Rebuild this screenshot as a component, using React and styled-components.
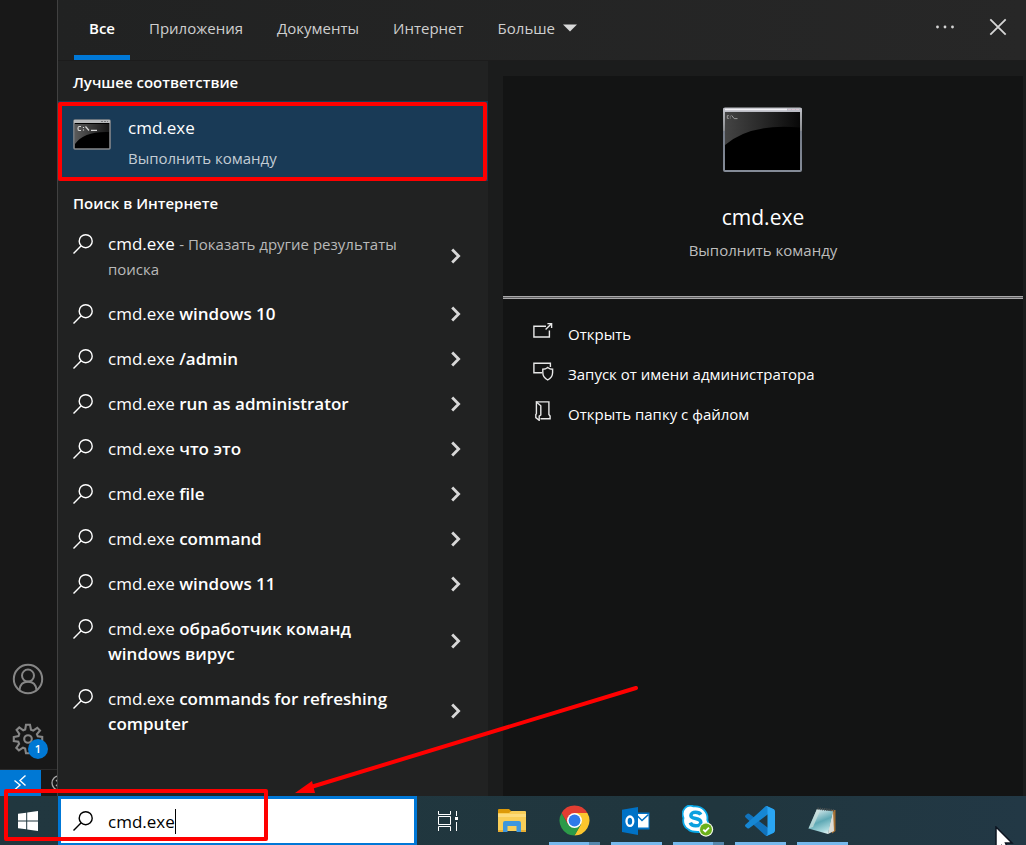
import React, { useState } from "react";
import styled, { createGlobalStyle } from "styled-components";

const GlobalStyle = createGlobalStyle`
  * {
    box-sizing: border-box;
  }

  body {
    margin: 0;
    background-color: #181818;
    color: #ffffff;
    font-family: "Open Sans", "Noto Sans", sans-serif;
    font-size: 15px;
  }

  button {
    padding: 0;
    border: none;
    background: none;
    color: inherit;
    font: inherit;
    text-align: left;
    cursor: pointer;
  }

  svg {
    display: block;
    flex-shrink: 0;
  }
`;

const Desktop = styled.div`
  display: flex;
  flex-direction: column;
  min-height: 100vh;
  overflow: hidden;
`;

const Workspace = styled.div`
  display: flex;
  flex: 1;
`;

/* editor window behind the start menu */

const ActivityBar = styled.aside`
  display: flex;
  flex-direction: column;
  justify-content: flex-end;
  width: 57px;
  overflow: hidden;
`;

const ActivityButton = styled.button`
  position: relative;
  display: flex;
  align-items: center;
  justify-content: center;
  width: 56px;
  height: 60px;
  color: #868686;
`;

const Badge = styled.span`
  position: absolute;
  top: 30px;
  left: 28px;
  width: 20px;
  height: 20px;
  border-radius: 50%;
  background-color: #0078d4;
  color: white;
  font-size: 11px;
  font-weight: 600;
  line-height: 20px;
  text-align: center;
`;

const StatusBar = styled.div`
  display: flex;
  align-items: center;
  gap: 10px;
  width: 80px;
  height: 27px;
  border-top: 1px solid #2b2b2b;
`;

const RemoteButton = styled.button`
  display: flex;
  align-items: center;
  justify-content: center;
  width: 41px;
  height: 26px;
  padding-right: 2px;
  background-color: #0078d4;
`;

/* start menu */

const SearchPanel = styled.main`
  display: flex;
  flex: 1;
  flex-direction: column;
  border-left: 1px solid #414141;
  background-color: #212222;
`;

const PanelHeader = styled.header`
  display: flex;
  justify-content: space-between;
  height: 61px;
  padding: 0 19px 0 16px;
  border-bottom: 1px solid #1c1c1c;
  background: linear-gradient(90deg, #212222, #272727);
`;

const Tabs = styled.nav`
  display: flex;
  gap: 4px;
`;

const Tab = styled.button`
  display: flex;
  align-items: center;
  gap: 8px;
  height: 60px;
  padding: 0 15px 4px;
  border-top: 5px solid transparent;
  border-bottom: 5px solid ${(props) => (props.$active ? "#0078d7" : "transparent")};
  color: ${(props) => (props.$active ? "#ffffff" : "#cfcfcf")};
  font-weight: ${(props) => (props.$active ? 600 : 400)};
  line-height: 20px;
`;

const WindowActions = styled.div`
  display: flex;
  align-items: center;
  gap: 34px;
  height: 54px;
  color: #d6d6d6;
`;

const PanelBody = styled.div`
  display: flex;
  flex: 1;
`;

const Results = styled.section`
  width: 430px;
`;

const GroupTitle = styled.h2`
  margin: 0;
  padding: 3px 15px 0;
  font-size: 15px;
  font-weight: 600;
  line-height: ${(props) => (props.$tall ? "38px" : "37px")};
`;

const BestMatch = styled.button`
  position: relative;
  display: flex;
  gap: 17px;
  width: 100%;
  height: 80px;
  padding: 14px 15px;
  background-color: #193a56;
`;

const BestIcon = styled.span`
  padding-top: 4px;
`;

const BestName = styled.span`
  display: block;
  font-size: 17px;
  line-height: 25px;
`;

const BestHint = styled.span`
  display: block;
  margin-top: 6px;
  color: #c3ccd4;
  line-height: 24px;
`;

const ResultList = styled.ul`
  margin: 0;
  padding: 0;
  list-style: none;
`;

const ResultItem = styled.li`
  display: flex;
  align-items: center;
  justify-content: space-between;
  padding: 9px 27px 11px 15px;
`;

const ResultButton = styled.button`
  display: flex;
  gap: 15px;
  width: 350px;
  font-size: 17px;
  line-height: 25px;

  svg {
    margin-top: 3px;
  }

  strong {
    font-weight: 600;
  }
`;

const Note = styled.span`
  color: #b9b9b9;
  font-size: 15px;
  line-height: 20px;
`;

const DetailPane = styled.section`
  display: flex;
  flex: 1;
  padding: 15px 3px 0 15px;
  background-color: #1b1c1c;
`;

const DetailCard = styled.article`
  flex: 1;
  background-color: #131414;
`;

const DetailHead = styled.div`
  display: flex;
  flex-direction: column;
  align-items: center;
  height: 220px;
  padding-top: 31px;
`;

const DetailTitle = styled.h1`
  margin: 27px 0 0;
  font-size: 21px;
  font-weight: 400;
  line-height: 34px;
`;

const DetailHint = styled.p`
  margin: 4px 0 0;
  color: #bdbdbd;
  line-height: 24px;
`;

const Divider = styled.hr`
  height: 3px;
  margin: 0;
  border: solid #a9a8aa;
  border-width: 1px 0;
  background-color: #5f5f61;
`;

const ActionList = styled.div`
  display: flex;
  flex-direction: column;
  padding: 15px 30px;
`;

const Action = styled.button`
  display: flex;
  align-items: center;
  gap: 14px;
  height: 40px;

  svg {
    margin-bottom: 6px;
  }
`;

/* taskbar */

const Taskbar = styled.footer`
  position: relative;
  display: flex;
  height: 49px;
  background: linear-gradient(90deg, #21373f, #20363e 70%, #223845 100%);
`;

const StartButton = styled.button`
  display: flex;
  align-items: center;
  justify-content: center;
  width: 58px;
  padding-right: 2px;
`;

const SearchBox = styled.label`
  display: flex;
  align-items: center;
  width: 359px;
  padding-left: 12px;
  border: 3px solid #0078d7;
  border-bottom-width: 2px;
  background-color: white;
  color: black;
`;

const SearchInput = styled.input`
  field-sizing: content;
  margin-left: 15px;
  padding: 0;
  border: none;
  outline: none;
  background: none;
  color: black;
  caret-color: transparent;
  font: inherit;
  font-size: 17px;
`;

const Caret = styled.span`
  width: 1px;
  height: 25px;
  background-color: black;
`;

const TaskButton = styled.button`
  display: flex;
  flex-direction: column;
  align-items: center;
  justify-content: space-between;
  width: ${(props) => (props.$wide ? "64px" : "62px")};
`;

const TaskIcon = styled.span`
  display: flex;
  align-items: center;
  height: 46px;
  padding-top: 3px;
`;

const Underline = styled.span`
  width: 51px;
  height: 3px;
  background: ${(props) =>
    props.$stacked
      ? "linear-gradient(90deg, #76b9ed 40px, #5487ac 40px)"
      : "#76b9ed"};
`;

/* red marks */

const MatchFrame = styled.span`
  position: absolute;
  inset: 1px 1px 0 0;
  border: 4px solid #ff0000;
  border-radius: 2px;
`;

const SearchFrame = styled.span`
  position: absolute;
  top: -7px;
  left: 4px;
  width: 264px;
  height: 52px;
  border: 4px solid #ff0000;
  border-radius: 2px;
  pointer-events: none;
`;

const Arrow = styled.svg`
  position: absolute;
  bottom: 50px;
  left: 295px;
  pointer-events: none;
`;

const Pointer = styled.svg`
  position: absolute;
  top: 30px;
  right: 8px;
`;

const SearchIcon = () => (
  <svg width="20" height="20" viewBox="0 0 20 20" fill="none" stroke="currentColor" strokeWidth="1.4">
    <circle cx="12.7" cy="7.2" r="6.5" />
    <path d="M8.2 11.8 L0.5 19.5" />
  </svg>
);

const ChevronIcon = () => (
  <svg width="10" height="16" viewBox="0 0 10 16" fill="none" stroke="#d8d8d8" strokeWidth="2.8">
    <path d="M1.2 1.6 L7.6 8 L1.2 14.4" />
  </svg>
);

const ConsoleSmall = () => (
  <svg width="38" height="32" viewBox="0 0 38 32">
    <defs>
      <linearGradient id="glossSmall" x1="0" y1="0" x2="1" y2="0">
        <stop offset="0" stopColor="#5a5a5a" />
        <stop offset="1" stopColor="#161616" />
      </linearGradient>
    </defs>
    <rect x="1" y="1" width="36" height="29" rx="1" fill="#000" stroke="#85888b" strokeWidth="1.6" />
    <path d="M2 5 H36 V13 Q11 12 2 25 Z" fill="url(#glossSmall)" />
    <rect x="1" y="1" width="36" height="3" fill="#b6b8ba" />
    <path d="M28 2.5 H35" stroke="#77797b" strokeDasharray="2 1" />
    <path d="M8 7.5 H6 Q5 7.5 5 9.5 T6 11.5 H8 M10.5 8 V8.9 M10.5 10.5 V11.4 M12.5 7.5 L16 11.5 M18 11.4 H24" fill="none" stroke="#d7d7d7" strokeWidth="1.2" />
  </svg>
);

const ConsoleLarge = () => (
  <svg width="80" height="66" viewBox="0 0 80 66">
    <defs>
      <linearGradient id="glossLarge" x1="0" y1="0" x2="1" y2="0">
        <stop offset="0" stopColor="#444444" />
        <stop offset="0.5" stopColor="#282828" />
        <stop offset="1" stopColor="#080808" />
      </linearGradient>
      <linearGradient id="frameLarge" x1="0" y1="0" x2="0" y2="1">
        <stop offset="0" stopColor="#b9bbc0" />
        <stop offset="0.35" stopColor="#8c8e92" />
        <stop offset="0.36" stopColor="#747b88" />
        <stop offset="1" stopColor="#848b97" />
      </linearGradient>
    </defs>
    <rect x="1" y="1.5" width="77" height="62.5" rx="1" fill="#000" stroke="url(#frameLarge)" strokeWidth="2" />
    <path d="M2 5 H77 V20.5 Q27 16 2 38 Z" fill="url(#glossLarge)" />
    <rect x="0.5" y="1" width="78" height="4" fill="#bcbdc5" />
    <path d="M2 2.5 H64" stroke="#f1f1f5" strokeWidth="1.5" />
    <path d="M65 2.5 H77" stroke="#d8c5d2" strokeDasharray="3 1" />
    <path d="M5.8 8.6 H4.3 V11.4 H5.8 M7.3 8.8 V9.6 M7.3 10.6 V11.4 M8.6 8.4 L11.2 11.6 M11.2 11.6 H14.5" fill="none" stroke="#9b9b9b" />
  </svg>
);

const OpenIcon = () => (
  <svg width="21" height="20" viewBox="0 0 21 20" fill="none" stroke="#e8e8e8" strokeWidth="1.4">
    <path d="M13 5.2 H0.9 V16 H16.4 V9.5" />
    <path d="M12.6 8.5 L18.4 2.7 M14.4 2.6 H18.6 V6.9" />
  </svg>
);

const AdminIcon = () => (
  <svg width="21" height="20" viewBox="0 0 21 20" fill="none" stroke="#e8e8e8" strokeWidth="1.4">
    <path d="M17.4 6 V2.2 H0.9 V11.7 H9" />
    <path d="M14.7 6.5 Q12.5 8.2 9.8 8.2 V11.5 Q9.8 16.5 14.7 19 Q19.6 16.5 19.6 11.5 V8.2 Q16.9 8.2 14.7 6.5 Z" />
  </svg>
);

const FolderIcon = () => (
  <svg width="21" height="20" viewBox="0 0 21 20" fill="none" stroke="#e8e8e8" strokeWidth="1.4">
    <path d="M3.4 0.9 H15.9 V13.4 L17.1 15 V17.8 H7.5" />
    <path d="M3.4 0.9 L7.8 4.8 V14 L6.2 15.2 V19.3 L2.8 16.6 V13.6 L3.4 12.8 Z" />
  </svg>
);

const AccountIcon = () => (
  <svg width="32" height="32" viewBox="0 0 32 32" fill="none" stroke="currentColor" strokeWidth="2">
    <circle cx="16" cy="16" r="14.2" />
    <circle cx="16" cy="12.6" r="6" />
    <path d="M7.5 27 C8 21.5 11.5 18.8 16 18.8 S24 21.5 24.5 27" />
  </svg>
);

const GearIcon = () => (
  <svg width="32" height="32" viewBox="0 0 32 32" fill="none" stroke="currentColor" strokeWidth="2.1">
    <path d="M14 1.8 H18 L19 6.7 L21.2 7.6 L25.3 4.8 L28 7.5 L24.9 11.2 L25.8 13.4 L30.2 14 V18 L25.4 18.7 L24.5 21 L27.3 25 L24.6 27.7 L20.7 24.9 L18.8 25.8 L18 30.2 H14 L13.1 25.6 L11 24.7 L6.9 27.4 L4.3 24.8 L7.1 20.8 L6.3 18.8 L1.8 18 V14 L6.5 13.1 L7.3 11 L4.6 7 L7.3 4.4 L11.2 7.3 L13.2 6.5 Z" />
    <circle cx="16" cy="16" r="3.8" />
  </svg>
);

const RemoteIcon = () => (
  <svg width="14" height="18" viewBox="0 0 14 18" fill="none" stroke="#fff" strokeWidth="1.4">
    <path d="M1.5 6.5 L7 11 L1.5 16 M12.5 1.5 L7 6.5 L12.5 11.5" />
  </svg>
);

const ErrorIcon = () => (
  <svg width="16" height="16" viewBox="0 0 16 16" fill="none" stroke="#a9a9a9" strokeWidth="1.3">
    <circle cx="8" cy="8" r="7" />
    <path d="M5 5 L11 11 M11 5 L5 11" />
  </svg>
);

const WindowsIcon = () => (
  <svg width="20" height="20" viewBox="0 0 20 20" fill="#fff">
    <path d="M0 2.8 L8.2 1.7 V9.5 H0 Z M9.2 1.5 L20 0 V9.5 H9.2 Z M0 10.5 H8.2 V18.3 L0 17.2 Z M9.2 10.5 H20 V20 L9.2 18.5 Z" />
  </svg>
);

const TaskViewIcon = () => (
  <svg width="22" height="20" viewBox="0 0 22 20" fill="none" stroke="#fff" strokeWidth="1">
    <path d="M0.5 0 V3.5 H12.5 V0 M0.5 20 V15.5 H12.5 V20 M0.5 5.5 H12.5 V13.5 H0.5 Z M18.5 0 V5 M18.5 11 V20" />
    <rect x="17" y="6" width="3" height="3" fill="#fff" stroke="none" />
  </svg>
);

const ExplorerIcon = () => (
  <svg width="28" height="24" viewBox="0 0 28 24">
    <path d="M0 1 Q0 0 1 0 H11 L13.5 2.5 V7 H0 Z" fill="#dd9a09" />
    <path d="M0 4 H11 L13.5 2 H27 Q28 2 28 3 V22 H0 Z" fill="#f9ce58" />
    <path d="M0 5 H28 V8 H0 Z" fill="#fddc7c" />
    <path d="M5 23 V14 Q5 12 7 12 H21 Q23 12 23 14 V23 H18.5 V17 H9.5 V23 Z" fill="#3f97de" />
    <path d="M0 21 H5 V23 H0 Z M23 21 H28 V23 H23 Z" fill="#e9af33" />
  </svg>
);

const ChromeIcon = () => (
  <svg width="31" height="31" viewBox="0 0 100 100">
    <path d="M50 26 H91.6 A48 48 0 0 1 50 98 L70.8 62 Z" fill="#fcc62e" />
    <path d="M50 98 A48 48 0 0 1 8.4 26 L29.2 62 L70.8 62 Z" fill="#2c9a48" />
    <path d="M8.4 26 A48 48 0 0 1 91.6 26 H50 L29.2 62 Z" fill="#e23e32" />
    <circle cx="50" cy="50" r="24" fill="#fff" />
    <circle cx="50" cy="50" r="19" fill="#2f7aea" />
  </svg>
);

const OutlookIcon = () => (
  <svg width="28" height="28" viewBox="0 0 28 28">
    <rect x="14" y="5.5" width="13.5" height="17" fill="#0072c6" />
    <path d="M15 7 H26.5 V20.5 H15 Z" fill="#fff" />
    <path d="M15 8.5 L20 13.5 L26.5 7.5" fill="none" stroke="#0072c6" strokeWidth="1.6" />
    <path d="M0 2.8 L16 0 V28 L0 25 Z" fill="#0072c6" />
    <ellipse cx="7.9" cy="14.2" rx="3.4" ry="4.7" fill="none" stroke="#fff" strokeWidth="2.3" />
  </svg>
);

const SkypeIcon = () => (
  <svg width="32" height="32" viewBox="0 0 32 32">
    <path d="M3 3 C6 -0.2 9.5 0.4 11.5 1.4 C20 0.4 26.5 7 25.3 15 C28 21 24 27.5 17.5 27 C15 27 9.5 27.5 6.5 24.5 C2 22.5 0.5 17.5 1.5 13 C0 9.5 0.2 6 3 3 Z" fill="#fff" stroke="#0aa9e8" strokeWidth="1.8" />
    <path d="M18.8 9.6 C17.8 7.8 15.8 7.2 13.5 7.2 C10.8 7.2 8.9 8.5 8.9 10.4 C8.9 14.8 18.8 12.3 18.8 17.2 C18.8 19.8 16.3 20.8 13.7 20.8 C11 20.8 9 19.6 8.3 17.6" fill="none" stroke="#0aa0df" strokeWidth="3.5" />
    <circle cx="24" cy="24.5" r="7.2" fill="#f3f7ea" />
    <circle cx="24" cy="24.5" r="6" fill="#6bb11b" />
    <path d="M21.3 24.6 L23.2 26.5 L27 22.6" fill="none" stroke="#fff" strokeWidth="1.8" />
  </svg>
);

const CodeIcon = () => (
  <svg width="30" height="30" viewBox="0 0 100 100">
    <path d="M2 31 L8 26 Q11 24 14 26 L97 88 L74 99 Q70 101 66 97 L2 38 Q-2 34 2 31 Z" fill="#1173bd" />
    <path d="M2 69 L8 74 Q11 76 14 74 L97 12 L74 1 Q70 -1 66 3 L2 62 Q-2 66 2 69 Z" fill="#1687d4" />
    <path d="M74 1 L96 11 Q100 13 100 18 V82 Q100 87 96 89 L74 99 Q71 100 69 98 Q75 100 75 92 V8 Q75 0 69 2 Q71 0 74 1 Z" fill="#2aa5f3" />
  </svg>
);

const NotepadIcon = () => (
  <svg width="28" height="28" viewBox="0 0 28 28">
    <defs>
      <linearGradient id="pageFill" x1="0.3" y1="0" x2="0.7" y2="1">
        <stop offset="0" stopColor="#e2f0f1" />
        <stop offset="0.5" stopColor="#5fa9b5" />
        <stop offset="0.85" stopColor="#a9d8dd" />
        <stop offset="1" stopColor="#dceeee" />
      </linearGradient>
    </defs>
    <path d="M23 3 H27.5 V24 L24 26.5 Z" fill="#a56f31" />
    <path d="M25 4 L26 24 L20 27 L21 20 Z" fill="#dcdcd6" />
    <path d="M9 2 L25 4 L20 27 L0.5 21.5 Z" fill="url(#pageFill)" />
    <path d="M9 2 L0.5 21.5 L5 20 L12 4 Z" fill="#cfe1de" opacity="0.7" />
    <path d="M9.5 1.6 L26 3.4" stroke="#4a5051" strokeWidth="2.4" strokeDasharray="1.2 1" />
  </svg>
);

const tabs = ["Все", "Приложения", "Документы", "Интернет"];

const suggestions = [
  "windows 10",
  "/admin",
  "run as administrator",
  "что это",
  "file",
  "command",
  "windows 11",
  "обработчик команд windows вирус",
  "commands for refreshing computer",
];

const actions = [
  { label: "Открыть", icon: <OpenIcon /> },
  { label: "Запуск от имени администратора", icon: <AdminIcon /> },
  { label: "Открыть папку с файлом", icon: <FolderIcon /> },
];

const tasks = [
  { name: "Проводник", icon: <ExplorerIcon /> },
  { name: "Google Chrome", icon: <ChromeIcon />, open: true, stacked: true },
  { name: "Outlook", icon: <OutlookIcon />, open: true },
  { name: "Skype", icon: <SkypeIcon />, open: true, stacked: true },
  { name: "Visual Studio Code", icon: <CodeIcon />, open: true },
  { name: "Блокнот", icon: <NotepadIcon />, open: true },
];

const Result = ({ children }) => (
  <ResultItem>
    <ResultButton>
      <SearchIcon />
      <span>cmd.exe {children}</span>
    </ResultButton>
    <button aria-label="Подробнее">
      <ChevronIcon />
    </button>
  </ResultItem>
);

const App = () => {
  const [activeTab, setActiveTab] = useState("Все");
  const [query, setQuery] = useState("cmd.exe");

  return (
    <>
      <GlobalStyle />
      <Desktop>
        <Workspace>
          <ActivityBar>
            <ActivityButton aria-label="Учетные записи">
              <AccountIcon />
            </ActivityButton>
            <ActivityButton aria-label="Управление">
              <GearIcon />
              <Badge>1</Badge>
            </ActivityButton>
            <StatusBar>
              <RemoteButton aria-label="Удаленное окно">
                <RemoteIcon />
              </RemoteButton>
              <ErrorIcon />
            </StatusBar>
          </ActivityBar>
          <SearchPanel>
            <PanelHeader>
              <Tabs>
                {tabs.map((tab) => (
                  <Tab key={tab} $active={tab === activeTab} onClick={() => setActiveTab(tab)}>
                    {tab}
                  </Tab>
                ))}
                <Tab>
                  Больше
                  <svg width="14" height="8" viewBox="0 0 14 8" fill="#d8d8d8">
                    <path d="M0 0.5 H14 L7 7.5 Z" />
                  </svg>
                </Tab>
              </Tabs>
              <WindowActions>
                <button aria-label="Параметры">
                  <svg width="20" height="4" viewBox="0 0 20 4" fill="currentColor">
                    <circle cx="2.5" cy="2" r="1.4" />
                    <circle cx="10" cy="2" r="1.4" />
                    <circle cx="17.5" cy="2" r="1.4" />
                  </svg>
                </button>
                <button aria-label="Закрыть">
                  <svg width="18" height="18" viewBox="0 0 18 18" stroke="currentColor" strokeWidth="1.8">
                    <path d="M1.3 1.3 L16.7 16.7 M16.7 1.3 L1.3 16.7" />
                  </svg>
                </button>
              </WindowActions>
            </PanelHeader>
            <PanelBody>
              <Results>
                <GroupTitle>Лучшее соответствие</GroupTitle>
                <BestMatch>
                  <BestIcon>
                    <ConsoleSmall />
                  </BestIcon>
                  <span>
                    <BestName>cmd.exe</BestName>
                    <BestHint>Выполнить команду</BestHint>
                  </span>
                  <MatchFrame />
                </BestMatch>
                <GroupTitle $tall>Поиск в Интернете</GroupTitle>
                <ResultList>
                  <Result>
                    <Note>- Показать другие результаты поиска</Note>
                  </Result>
                  {suggestions.map((text) => (
                    <Result key={text}>
                      <strong>{text}</strong>
                    </Result>
                  ))}
                </ResultList>
              </Results>
              <DetailPane>
                <DetailCard>
                  <DetailHead>
                    <ConsoleLarge />
                    <DetailTitle>cmd.exe</DetailTitle>
                    <DetailHint>Выполнить команду</DetailHint>
                  </DetailHead>
                  <Divider />
                  <ActionList>
                    {actions.map((action) => (
                      <Action key={action.label}>
                        {action.icon}
                        {action.label}
                      </Action>
                    ))}
                  </ActionList>
                </DetailCard>
              </DetailPane>
            </PanelBody>
          </SearchPanel>
        </Workspace>
        <Taskbar>
          <StartButton aria-label="Пуск">
            <WindowsIcon />
          </StartButton>
          <SearchBox>
            <SearchIcon />
            <SearchInput
              aria-label="Поиск"
              value={query}
              onChange={(e) => setQuery(e.target.value)}
            />
            <Caret />
          </SearchBox>
          <TaskButton $wide aria-label="Представление задач">
            <TaskIcon>
              <TaskViewIcon />
            </TaskIcon>
          </TaskButton>
          {tasks.map((task) => (
            <TaskButton key={task.name} aria-label={task.name}>
              <TaskIcon>{task.icon}</TaskIcon>
              {task.open && <Underline $stacked={task.stacked} />}
            </TaskButton>
          ))}
          <SearchFrame />
          <Arrow width="344" height="112" viewBox="0 0 344 112">
            <path d="M16 104 L341 5" stroke="#ff0000" strokeWidth="4" strokeLinecap="round" />
            <path d="M0 110 L17 98 L20 110 Z" fill="#ff0000" />
          </Arrow>
          <Pointer width="24" height="19" viewBox="0 0 24 19">
            <path d="M2 1 V25 L7.5 19.5 L11 27 L15 25 L11.5 17 H18 Z" fill="#fff" stroke="#0d1420" strokeWidth="1.5" />
          </Pointer>
        </Taskbar>
      </Desktop>
    </>
  );
};

export default App;
